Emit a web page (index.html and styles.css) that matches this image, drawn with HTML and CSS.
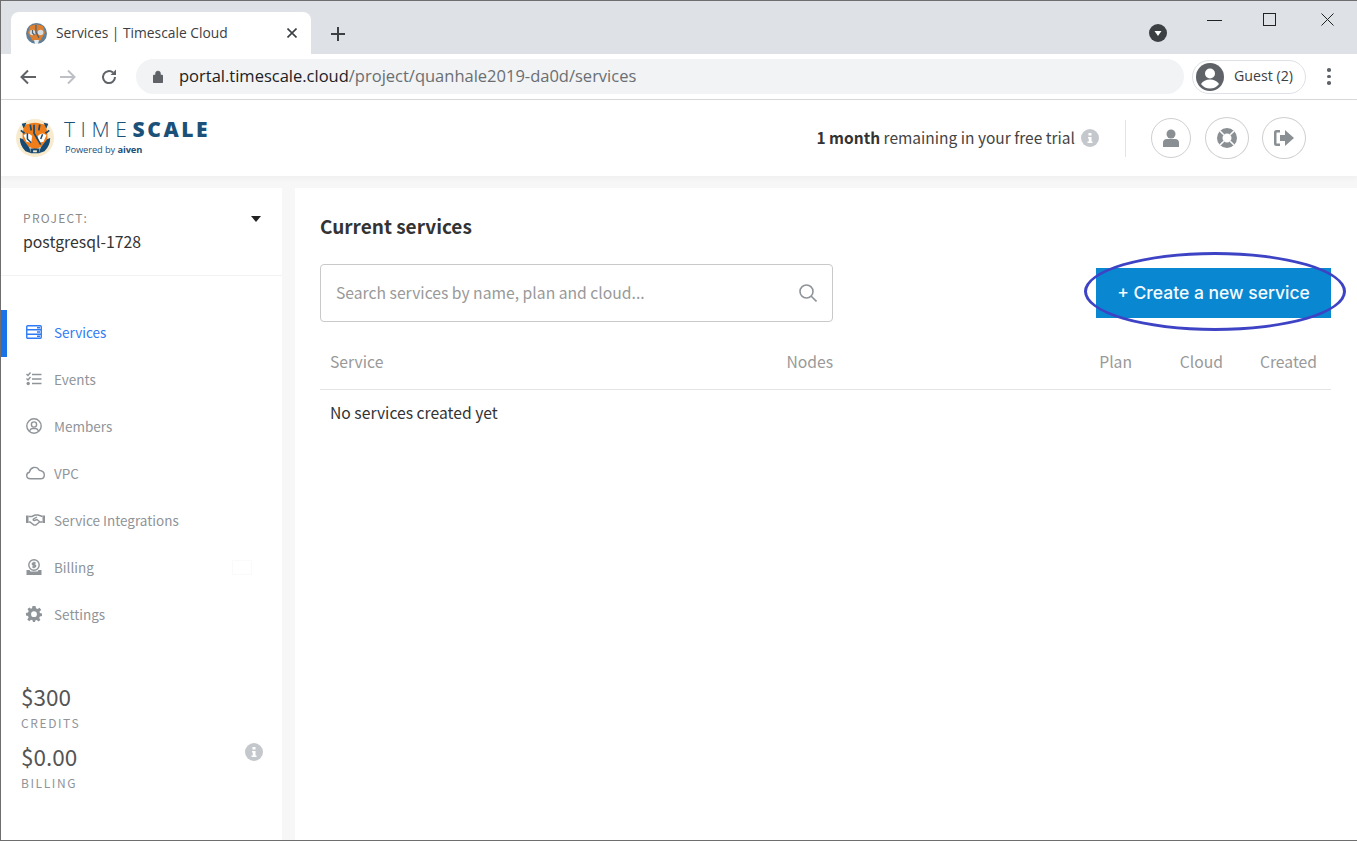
FILE: index.html
```html
<!DOCTYPE html>
<html lang="en">
<head>
  <meta charset="UTF-8" />
  <title>Services | Timescale Cloud</title>
  <meta name="viewport" content="width=device-width, initial-scale=1.0">
  <link rel="stylesheet" href="styles.css">
</head>
<body>

  <svg class="defs" width="0" height="0">
    <symbol id="tiger" viewBox="0 0 40 40">
      <circle cx="20" cy="20" r="20" fill="#f8ebcd"/>
      <path d="M9 6 L14 5 Q20 3 26 5 L31 6 L33 14 L33 22 L27 29 L20 32 L13 29 L7 22 L7 14 Z" fill="#ee7d1a"/>
      <path d="M6 5 L11 4 L8 10 Z M34 5 L29 4 L32 10 Z" fill="#174a73"/>
      <path d="M4 20 L7 21 L14 30 L16 36 L10 34 Q4 28 4 20 Z M36 20 L33 21 L26 30 L24 36 L30 34 Q36 28 36 20 Z" fill="#174a73"/>
      <path d="M5 12 L9 15 M35 12 L31 15 M15 6 L16 12 M25 6 L24 12" stroke="#174a73" stroke-width="1.8" fill="none"/>
      <path d="M8 17 Q13 13 17 18 L16 25 L11 24 Z M32 17 Q27 13 23 18 L24 25 L29 24 Z" fill="#fff"/>
      <path d="M19 6 V15 L26 27" stroke="#174a73" stroke-width="1.8" fill="none"/>
      <path d="M12 15 V21 L16 25" stroke="#174a73" stroke-width="1.6" fill="none"/>
      <path d="M28 16 L26 21" stroke="#174a73" stroke-width="1.6" fill="none"/>
      <path d="M15 31 H25 L24 36 H16 Z" fill="#174a73"/>
      <path d="M18 33 H22 V35 H18 Z" fill="#f8ebcd"/>
    </symbol>
    <symbol id="favicon-tiger" viewBox="0 0 21 21">
      <circle cx="10.5" cy="10.5" r="10.5" fill="#5f7f99"/>
      <path d="M4 3 Q10.5 0 17 3 L19 10 L14 18 H7 L2 10 Z" fill="#dd7f2e"/>
      <circle cx="6.5" cy="9.5" r="2.8" fill="#d5dde2"/>
      <circle cx="14.5" cy="9.5" r="2.8" fill="#d5dde2"/>
      <path d="M10 2 V9 L13 15 M6.5 7 V10 L8.5 12" stroke="#51606d" stroke-width="1.2" fill="none"/>
      <path d="M8 17 H13 L12 21 H9 Z" fill="#e8edf0"/>
    </symbol>
  </svg>

  <div class="window">

    <div class="tabstrip">
      <div class="tab">
        <svg class="favicon" viewBox="0 0 21 21"><use href="#favicon-tiger"/></svg>
        <span class="tab-title">Services | Timescale Cloud</span>
        <svg class="tab-close" viewBox="0 0 10 10"><path d="M0.5 0.5 L9.5 9.5 M9.5 0.5 L0.5 9.5"/></svg>
      </div>
      <svg class="new-tab" viewBox="0 0 14 14"><path d="M7 0 V14 M0 7 H14"/></svg>
      <div class="strip-right">
        <span class="tab-search"><svg viewBox="0 0 18 18"><circle cx="9" cy="9" r="9" fill="#3c4043"/><path d="M5.5 7 H12.5 L9 12 Z" fill="#fff"/></svg></span>
        <svg class="win-min" viewBox="0 0 15 1"><path d="M0 .5 H15"/></svg>
        <svg class="win-max" viewBox="0 0 13 13"><rect x=".5" y=".5" width="12" height="12"/></svg>
        <svg class="win-close" viewBox="0 0 13 13"><path d="M.5 .5 L12.5 12.5 M12.5 .5 L.5 12.5"/></svg>
      </div>
    </div>

    <div class="toolbar">
      <svg class="nav-btn" viewBox="0 0 16 16"><path d="M16 8 H2 M8 1.5 L1.5 8 L8 14.5"/></svg>
      <svg class="nav-btn off" viewBox="0 0 16 16"><path d="M0 8 H14 M8 1.5 L14.5 8 L8 14.5"/></svg>
      <svg class="nav-btn reload" viewBox="0 0 16 16"><path d="M14 8 A6 6 0 1 1 12 3.6"/><path class="fill" d="M15 0.5 V6 H9.5 Z"/></svg>
      <div class="omnibox">
        <svg class="lock" viewBox="0 0 10 13"><path d="M1 5 H9 Q10 5 10 6 V12 Q10 13 9 13 H1 Q0 13 0 12 V6 Q0 5 1 5 Z M2.5 5 V3.5 A2.5 2.5 0 0 1 7.5 3.5 V5" /></svg>
        <span class="url"><span class="host">portal.timescale.cloud</span>/project/quanhale2019-da0d/services</span>
      </div>
      <div class="guest">
        <svg class="guest-avatar" viewBox="0 0 28 28">
          <circle cx="14" cy="14" r="14" fill="#5f6368"/>
          <circle cx="14" cy="10.5" r="5" fill="#fff"/>
          <path d="M5 21 Q8 16.5 14 16.5 Q20 16.5 23 21 Q19.5 25.5 14 25.5 Q8.5 25.5 5 21 Z" fill="#fff"/>
        </svg>
        <span>Guest (2)</span>
      </div>
      <div class="dots"><i></i><i></i><i></i></div>
    </div>

    <header class="app-header">
      <svg class="logo-mark" viewBox="0 0 40 40"><use href="#tiger"/></svg>
      <div class="logo-text">
        <div class="logo-name"><span>TIME</span><b>SCALE</b></div>
        <div class="logo-sub">Powered by <b>aiven</b></div>
      </div>
      <div class="trial"><b>1 month</b> remaining in your free trial</div>
      <svg class="info trial-info" viewBox="0 0 18 18"><circle cx="9" cy="9" r="9"/><path d="M7.5 4 H10.5 V6.5 H7.5 Z M7 8 H10.5 V12.5 H11.5 V14 H6.5 V12.5 H7.8 V9.5 H7 Z"/></svg>
      <div class="header-sep"></div>
      <div class="round-btn small">
        <svg viewBox="0 0 16 18"><circle cx="8" cy="5" r="4.5"/><path d="M0 18 V14 Q0 10 4 10 H12 Q16 10 16 14 V18 Z"/></svg>
      </div>
      <div class="round-btn">
        <svg viewBox="0 0 20 20"><path fill-rule="evenodd" d="M10 0 A10 10 0 1 0 10 20 A10 10 0 1 0 10 0 Z M10 5.5 A4.5 4.5 0 1 1 10 14.5 A4.5 4.5 0 1 1 10 5.5 Z"/><path class="lines" d="M3 3 L6.8 6.8 M17 3 L13.2 6.8 M3 17 L6.8 13.2 M17 17 L13.2 13.2"/></svg>
      </div>
      <div class="round-btn">
        <svg viewBox="0 0 20 16"><path d="M11 0 L20 8 L11 16 V11 H6 V5 H11 Z"/><path d="M6 0 V2.5 H3 Q2.5 2.5 2.5 3 V13 Q2.5 13.5 3 13.5 H6 V16 H2.5 Q0 16 0 13.5 V2.5 Q0 0 2.5 0 Z"/></svg>
      </div>
    </header>

    <div class="app-body">
      <aside class="sidebar">
        <div class="project">
          <div class="project-label">PROJECT:</div>
          <div class="project-name">postgresql-1728</div>
          <span class="caret"></span>
        </div>

        <nav class="side-nav">
          <a class="nav-item active">
            <svg viewBox="0 0 16 14"><rect x=".75" y=".75" width="14.5" height="12.5" rx="1"/><path d="M1 4.8 H15 M1 9.2 H15 M11 2.8 H14 M11 7 H14 M11 11.2 H14"/></svg>
            Services
          </a>
          <a class="nav-item">
            <svg viewBox="0 0 16 14"><path d="M6 2.5 H15.5 M6 7 H15.5 M6 11.5 H15.5 M.5 2 L2 3.5 L4.5 .5 M.5 6.5 L2 8 L4.5 5"/><circle class="fill" cx="2.2" cy="11.5" r="1.7"/></svg>
            Events
          </a>
          <a class="nav-item">
            <svg viewBox="0 0 16 16"><circle cx="8" cy="8" r="7.2"/><circle cx="8" cy="6.5" r="2.6"/><path d="M3.5 13 Q4.5 10.5 6.5 10.5 H9.5 Q11.5 10.5 12.5 13"/></svg>
            Members
          </a>
          <a class="nav-item">
            <svg class="wide" viewBox="0 0 19 13"><path d="M4.5 12.2 Q.7 12.2 .7 9 Q.7 6.3 3.4 5.7 Q4.2 2 7.5 1 Q11.5 .2 13.2 3.7 Q18.3 4.5 18.3 8.4 Q18.3 12.2 14.5 12.2 Z"/></svg>
            VPC
          </a>
          <a class="nav-item">
            <svg class="wide" viewBox="0 0 19 12"><path class="fill" d="M0 1.5 H2.5 V9 H0 Z M16.5 1.5 H19 V9 H16.5 Z"/><path d="M2.5 2.5 H6 L9 1 H12 L16.5 2.5 M2.5 8 H4 L8 11 Q9.5 11.5 10.5 10.5 L13.5 8 H16.5 M11 3 L7.5 5 Q6.5 6.5 8.5 6.5 L11 5.5 L14 8"/></svg>
            Service Integrations
          </a>
          <a class="nav-item">
            <svg viewBox="0 0 15 16"><circle cx="7.5" cy="6" r="5.2"/><path class="fill" d="M0 11 H3 L4 12.5 H11 L12 11 H15 V16 H0 Z"/><path d="M9.2 4 H6.8 Q5.8 4 5.8 5 Q5.8 6 7 6 H8.2 Q9.2 6 9.2 7 Q9.2 8 8 8 H5.8 M7.5 2.8 V9.2"/></svg>
            Billing
            <span class="ghost-mail"></span>
          </a>
          <a class="nav-item">
            <svg viewBox="0 0 16 16"><path class="fill" fill-rule="evenodd" d="M6.5 0 H9.5 L10 2.2 L11.6 2.9 L13.6 1.8 L15.2 3.9 L13.5 5.4 L13.9 7 L16 7.5 V10 L13.9 10.5 L13.2 12 L14.4 14 L12.4 15.5 L10.8 14 L9.5 14.3 L9 16 H7 L6.5 14.3 L5 13.8 L3.2 15.2 L1.3 13.4 L2.6 11.6 L2 10 L0 9.5 V7 L2 6.5 L2.7 5 L1.5 3.1 L3.4 1.4 L5 2.7 L6 2.3 Z M8 5.3 A2.9 2.9 0 1 0 8 11.1 A2.9 2.9 0 1 0 8 5.3 Z"/></svg>
            Settings
          </a>
        </nav>

        <div class="balances">
          <div class="amount">$300</div>
          <div class="amount-label">CREDITS</div>
          <div class="amount second">$0.00</div>
          <div class="amount-label">BILLING</div>
          <svg class="info balance-info" viewBox="0 0 18 18"><circle cx="9" cy="9" r="9"/><path d="M7.5 4 H10.5 V6.5 H7.5 Z M7 8 H10.5 V12.5 H11.5 V14 H6.5 V12.5 H7.8 V9.5 H7 Z"/></svg>
        </div>
      </aside>

      <main class="content">
        <h2>Current services</h2>

        <div class="actions">
          <div class="search">
            <span class="placeholder">Search services by name, plan and cloud...</span>
            <svg viewBox="0 0 18 18"><circle cx="7.5" cy="7.5" r="6.5"/><path d="M12.3 12.3 L17.5 17.5"/></svg>
          </div>
          <div class="create-wrap">
            <button class="create-btn">+ Create a new service</button>
            <div class="ring"></div>
          </div>
        </div>

        <div class="table-head">
          <span>Service</span>
          <span>Nodes</span>
          <span>Plan</span>
          <span>Cloud</span>
          <span>Created</span>
        </div>
        <div class="table-empty">No services created yet</div>
      </main>
    </div>
  </div>

</body>
</html>
```

FILE: styles.css
```css
* {
  box-sizing: border-box;
}

html,
body {
  margin: 0;
  height: 841px;
  overflow: hidden;
}

body {
  font-family: "Noto Sans CJK SC", "Noto Sans", sans-serif;
  background: #f7f7f7;
  color: #333;
}

.defs {
  position: absolute;
}

.window {
  height: 841px;
  display: flex;
  flex-direction: column;
  border-top: 1px solid #6e6e6e;
  border-left: 1px solid #6e6e6e;
  border-bottom: 1px solid #6e6e6e;
}

/* browser chrome */
.tabstrip {
  height: 53px;
  flex: none;
  background: #dee1e6;
  display: flex;
  align-items: flex-end;
  padding-left: 10px;
}

.tab {
  width: 300px;
  height: 42px;
  background: #fff;
  border-radius: 8px 8px 0 0;
  display: flex;
  align-items: center;
  padding: 0 14px 0 15px;
  font-family: "Open Sans", sans-serif;
  font-size: 13.8px;
  color: #3c4043;
}

.favicon {
  width: 21px;
  height: 21px;
  flex: none;
}

.tab-title {
  margin: 0 0 2px 9px;
  flex: 1;
}

.tab-close {
  width: 10px;
  height: 10px;
  fill: none;
  stroke: #3c4043;
  stroke-width: 1.6;
}

.new-tab {
  width: 14px;
  height: 14px;
  margin: 0 0 13px 20px;
  fill: none;
  stroke: #3c4043;
  stroke-width: 2;
}

.strip-right {
  flex: 1;
  align-self: stretch;
  position: relative;
}

.strip-right svg {
  position: absolute;
  fill: none;
  stroke: #222;
  stroke-width: 1;
}

.tab-search svg {
  left: 804px;
  top: 23px;
  width: 18px;
  height: 18px;
  stroke: none;
}

.win-min {
  left: 862px;
  top: 19px;
  width: 15px;
  height: 1px;
}

.win-max {
  left: 918px;
  top: 12px;
  width: 13px;
  height: 13px;
}

.win-close {
  left: 976px;
  top: 12px;
  width: 13px;
  height: 13px;
}

.toolbar {
  height: 46px;
  flex: none;
  background: #fff;
  border-bottom: 1px solid #d9dadc;
  display: flex;
  align-items: center;
  padding-left: 19px;
}

.nav-btn {
  width: 16px;
  height: 16px;
  margin-right: 24px;
  fill: none;
  stroke: #5f6368;
  stroke-width: 2;
}

.nav-btn.off {
  stroke: #bdc1c6;
}

.nav-btn.reload {
  margin: 0 0 0 1px;
}

.nav-btn .fill {
  fill: #5f6368;
  stroke: none;
}

.omnibox {
  width: 1048px;
  height: 35px;
  margin-left: 19px;
  background: #f1f3f4;
  border-radius: 18px;
  display: flex;
  align-items: center;
  padding-left: 17px;
}

.lock {
  width: 10px;
  height: 13px;
  fill: #5f6368;
  stroke: #5f6368;
  stroke-width: .5;
}

.url {
  margin: 0 0 2px 16px;
  font-family: "Open Sans", sans-serif;
  font-size: 16.5px;
  color: #6a6e72;
}

.host {
  color: #202124;
}

.guest {
  width: 114px;
  height: 34px;
  margin-left: 8px;
  border: 1px solid #dee1e6;
  border-radius: 17px;
  display: flex;
  align-items: center;
  padding-left: 3px;
  font-family: "Open Sans", sans-serif;
  font-size: 14.2px;
  color: #3c4043;
}

.guest span {
  margin-bottom: 3px;
}

.guest-avatar {
  width: 28px;
  height: 28px;
  margin-right: 10px;
}

.dots {
  margin-left: 21px;
  display: flex;
  flex-direction: column;
  gap: 3px;
}

.dots i {
  width: 3.5px;
  height: 3.5px;
  border-radius: 50%;
  background: #5f6368;
}

/* app header */
.app-header {
  height: 76px;
  flex: none;
  background: #fff;
  box-shadow: 0 2px 6px rgba(0, 0, 0, .04);
  display: flex;
  align-items: center;
  padding-left: 15px;
}

.logo-mark {
  width: 38px;
  height: 38px;
  flex: none;
}

.logo-text {
  margin-left: 10px;
  padding-bottom: 3px;
  color: #1b5079;
}

.logo-name {
  font-family: "Open Sans", sans-serif;
  font-size: 21px;
  line-height: 24px;
  letter-spacing: 5.6px;
  margin-bottom: 3px;
}

.logo-name span {
  font-weight: 300;
}

.logo-name b {
  font-weight: 800;
  letter-spacing: 2.6px;
}

.logo-sub {
  font-family: "Open Sans", sans-serif;
  font-size: 9.3px;
  line-height: 12px;
  letter-spacing: -.1px;
  margin-left: 1px;
}

.trial {
  margin: 0 0 2px auto;
  font-size: 15.5px;
  line-height: 24px;
  color: #444;
}

.trial b {
  font-weight: 700;
  color: #333;
}

.info {
  fill: #c4c8cc;
}

.info path {
  fill: #fff;
}

.trial-info {
  width: 18px;
  height: 18px;
  margin-left: 6px;
}

.header-sep {
  width: 1px;
  height: 37px;
  background: #e4e4e4;
  margin: 0 25px 0 26px;
}

.round-btn {
  width: 44px;
  height: 42px;
  margin-right: 13px;
  border: 1px solid #cfcfcf;
  border-radius: 50%;
  display: flex;
  align-items: center;
  justify-content: center;
}

.round-btn:last-child {
  margin-right: 51px;
}

.round-btn.small {
  width: 40px;
  height: 40px;
  margin-right: 14px;
}

.round-btn svg {
  width: 20px;
  height: 20px;
  fill: #8a8f94;
}

.round-btn.small svg {
  width: 16px;
  height: 18px;
}

.round-btn .lines {
  stroke: #fff;
  stroke-width: 1.5;
  fill: none;
}

/* page body */
.app-body {
  flex: 1;
  min-height: 0;
  display: flex;
  gap: 13px;
  padding-top: 12px;
}

.sidebar {
  width: 281px;
  flex: none;
  background: #fff;
  display: flex;
  flex-direction: column;
}

.project {
  position: relative;
  height: 88px;
  padding: 21px 22px 0;
  border-bottom: 1px solid #f2f2f2;
}

.project-label {
  font-size: 12px;
  line-height: 18px;
  letter-spacing: 1.3px;
  color: #8a8a8a;
}

.project-name {
  font-size: 15.8px;
  line-height: 24px;
  margin-top: 3px;
  color: #333;
}

.caret {
  position: absolute;
  right: 21px;
  top: 28px;
  border-style: solid;
  border-width: 6px 5.5px 0;
  border-color: #222 transparent transparent;
}

.side-nav {
  margin-top: 34px;
}

.nav-item {
  height: 47px;
  display: flex;
  align-items: center;
  padding: 0 0 3px 25px;
  font-size: 13.5px;
  color: #8f9499;
  position: relative;
}

.nav-item svg {
  width: 16px;
  height: 16px;
  margin-right: 12px;
  fill: none;
  stroke: #8f9499;
  stroke-width: 1.4;
  flex: none;
}

.nav-item svg.wide {
  width: 19px;
  margin-right: 9px;
}

.nav-item .fill {
  fill: #8f9499;
  stroke: none;
}

.nav-item.active {
  color: #2f7bf5;
  box-shadow: inset 6px 0 0 #1a73e8;
}

.nav-item.active svg {
  stroke: #2f7bf5;
}

.ghost-mail {
  position: absolute;
  left: 231px;
  top: 15px;
  width: 20px;
  height: 15px;
  border: 1px solid #fafafa;
}

.balances {
  position: relative;
  margin-top: 43px;
  padding-left: 20px;
}

.amount {
  font-size: 22.5px;
  line-height: 28px;
  color: #555;
}

.amount.second {
  margin-top: 10px;
}

.amount-label {
  font-size: 12px;
  line-height: 18px;
  letter-spacing: 1.6px;
  color: #8f9499;
  margin-top: 4px;
}

.balance-info {
  position: absolute;
  left: 244px;
  top: 61px;
  width: 18px;
  height: 18px;
}

.content {
  flex: 1;
  background: #fff;
  padding: 0 26px 0 25px;
}

.content h2 {
  margin: 23px 0 0;
  font-size: 19px;
  line-height: 30px;
  font-weight: 700;
  color: #333;
}

.actions {
  margin-top: 23px;
  display: flex;
  justify-content: space-between;
  align-items: center;
}

.search {
  width: 513px;
  height: 58px;
  border: 1px solid #c9c9c9;
  border-radius: 4px;
  display: flex;
  align-items: center;
  justify-content: space-between;
  padding: 0 15px;
  font-size: 15.7px;
  color: #999;
}

.placeholder {
  margin-bottom: 2px;
}

.search svg {
  width: 18px;
  height: 18px;
  fill: none;
  stroke: #8f9499;
  stroke-width: 1.6;
}

.create-wrap {
  position: relative;
}

.create-btn {
  display: block;
  width: 235px;
  height: 50px;
  border: 0;
  padding: 0 0 1px;
  background: #0a87d1;
  color: #f4fbff;
  font-family: Inter, sans-serif;
  font-size: 17.5px;
  font-weight: 500;
}

.ring {
  position: absolute;
  left: -12px;
  top: -16px;
  width: 262px;
  height: 79px;
  border: 3px solid #3d43c4;
  border-radius: 50%;
}

.table-head {
  margin-top: 23px;
  height: 45px;
  display: grid;
  grid-template-columns: 100px 403px 299px 91px 94px;
  align-items: center;
  padding: 0 14px 12px 10px;
  border-bottom: 1px solid #e4e4e4;
  font-size: 15.7px;
  color: #999;
}

.table-head span {
  justify-self: end;
}

.table-head span:first-child {
  justify-self: start;
}

.table-empty {
  padding: 11px 10px;
  font-size: 15.7px;
  line-height: 24px;
  color: #333;
}
```
